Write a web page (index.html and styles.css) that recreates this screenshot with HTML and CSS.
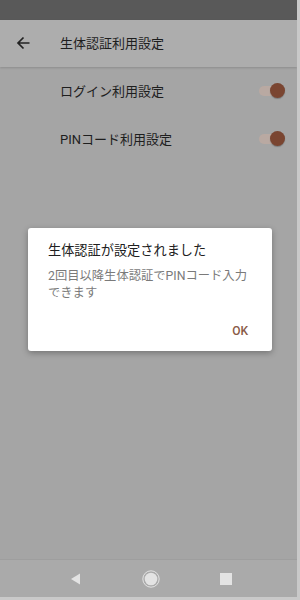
FILE: index.html
```html
<!DOCTYPE html>
<html lang="ja">
<head>
<meta charset="utf-8">
<link rel="stylesheet" href="styles.css">
</head>
<body>
<div class="screen">
  <div class="status"></div>
  <div class="appbar">
    <svg class="back" width="16" height="16" viewBox="0 0 16 16"><path d="M14.5 8H3M8.5 2.5L3 8l5.5 5.5" fill="none" stroke="#222" stroke-width="1.7"/></svg>
    <span class="title">生体認証利用設定</span>
  </div>
  <div class="content">
    <div class="row"><span class="label">ログイン利用設定</span><span class="toggle"><span class="thumb"></span></span></div>
    <div class="row"><span class="label">PINコード利用設定</span><span class="toggle"><span class="thumb"></span></span></div>
  </div>
  <div class="nav">
    <svg width="14" height="14" viewBox="0 0 14 14"><path d="M11 1.5V12.5L2 7Z" fill="#e3e3e3"/></svg>
    <svg width="20" height="20" viewBox="0 0 20 20"><circle cx="10" cy="10" r="8.2" fill="none" stroke="#e3e3e3" stroke-width="1"/><circle cx="10" cy="10" r="6.3" fill="#e3e3e3"/></svg>
    <svg width="14" height="14" viewBox="0 0 14 14"><rect x="1" y="1" width="12" height="12" fill="#e3e3e3"/></svg>
  </div>
  <div class="dialog">
    <div class="dtitle">生体認証が設定されました</div>
    <div class="dbody">2回目以降生体認証でPINコード入力できます</div>
    <div class="dactions"><span class="ok">OK</span></div>
  </div>
</div>
</body>
</html>
```
FILE: styles.css
```css
html, body { margin: 0; padding: 0; }
body { width: 300px; height: 600px; background: #c9c9c9; font-family: Roboto, "Noto Sans CJK JP", sans-serif; }
.screen { position: relative; width: 297px; height: 597px; display: flex; flex-direction: column; background: #a5a5a5; overflow: hidden; }
.status { height: 20px; background: #595959; flex: none; }
.appbar { height: 47px; background: #adadad; display: flex; align-items: center; flex: none; box-shadow: 0 1px 2px rgba(0,0,0,0.15); padding-bottom: 2px; box-sizing: border-box; }
.back { margin-left: 15px; }
.title { margin-left: 29px; font-size: 13px; color: #1e1e1e; }
.content { flex: 1; }
.row { height: 48px; display: flex; align-items: center; padding-left: 60px; padding-right: 16px; }
.label { flex: 1; font-size: 13px; color: #1e1e1e; margin-top: -2px; }
.toggle { position: relative; width: 22px; height: 10px; border-radius: 5px; background: #b9a9a2; }
.thumb { position: absolute; right: -4px; top: -3px; width: 15px; height: 15px; border-radius: 50%; background: #7a4531; box-shadow: 0 1px 1px rgba(0,0,0,0.25); }
.nav { height: 37px; background: #aaaaaa; border-top: 1px solid #9e9e9e; flex: none; display: flex; align-items: center; justify-content: center; gap: 58px; padding-left: 4px; }
.dialog { position: absolute; left: 28px; top: 228px; width: 244px; height: 123px; background: #fff; border-radius: 3px; box-sizing: border-box; padding: 14px 20px 0 20px; box-shadow: 0 2px 6px rgba(0,0,0,0.3); display: flex; flex-direction: column; }
.dtitle { font-size: 13.2px; color: #202020; line-height: 18px; }
.dbody { margin-top: 8px; font-size: 12.3px; color: #7a7a7a; line-height: 17px; width: 200px; }
.dactions { margin-top: auto; display: flex; justify-content: flex-end; padding-bottom: 13px; }
.ok { font-size: 12px; color: #8a5a46; font-weight: 500; padding-right: 4px; }
```
